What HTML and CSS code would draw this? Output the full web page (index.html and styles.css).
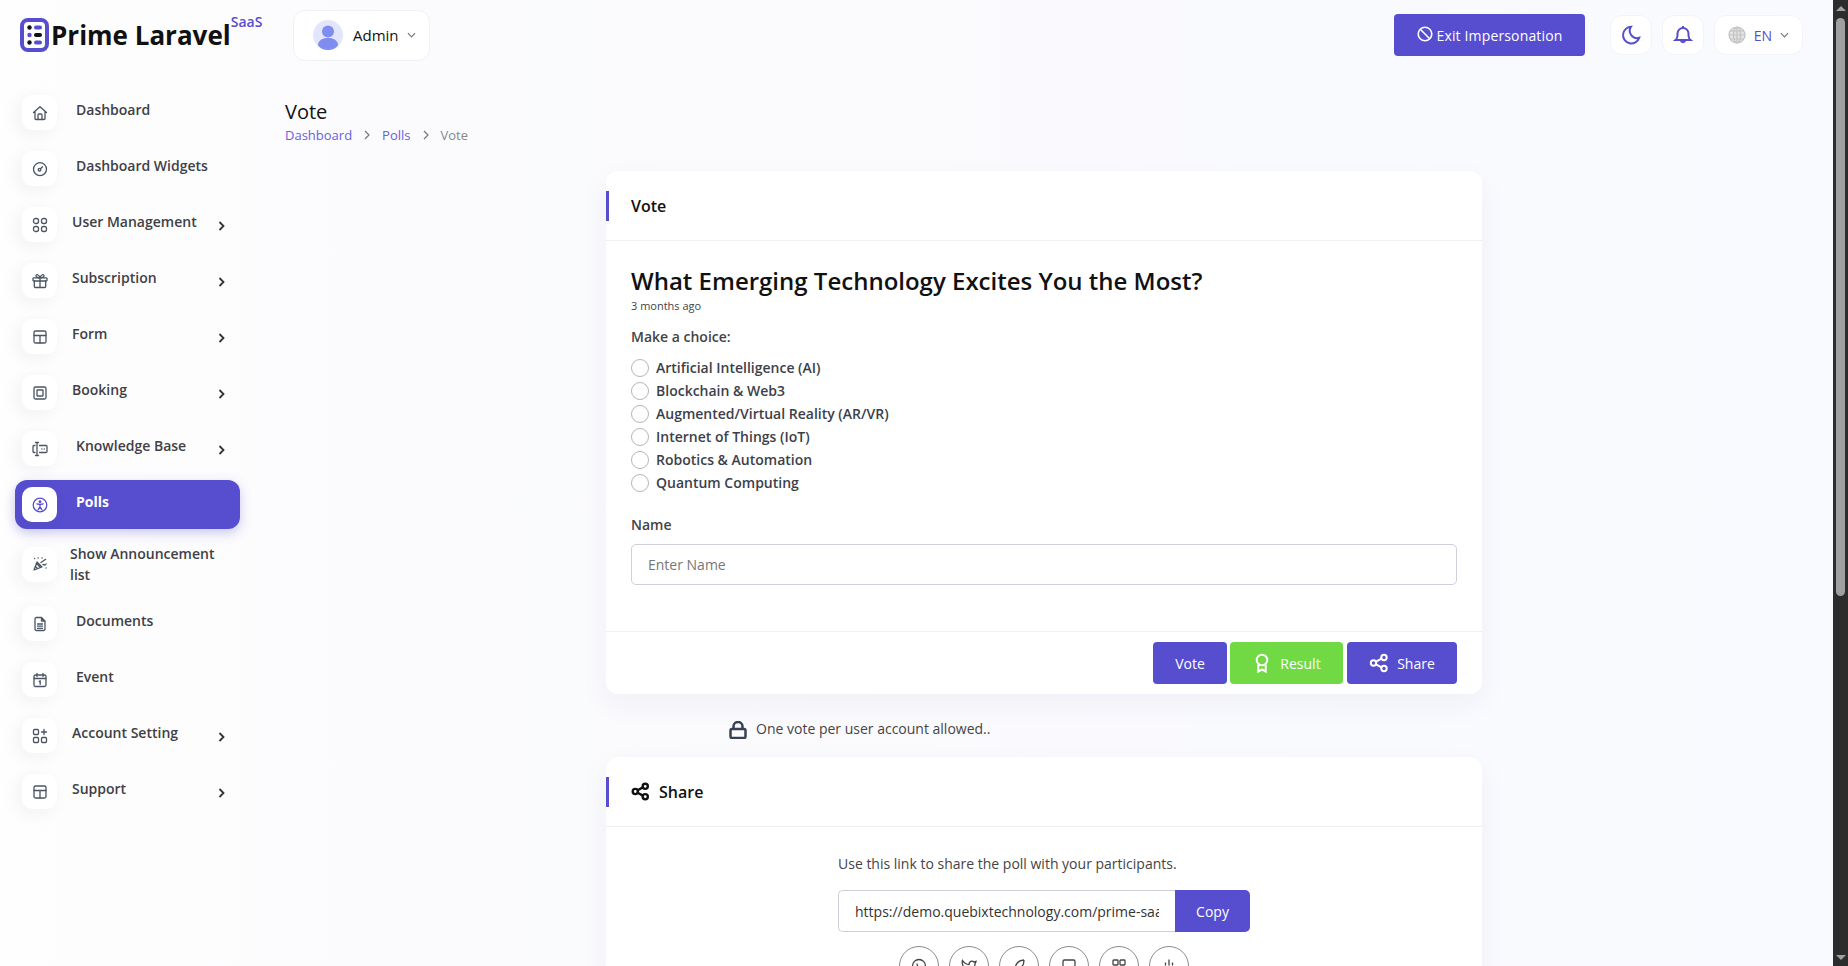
FILE: index.html
```html
<!DOCTYPE html>
<html lang="en">
<head>
  <meta charset="UTF-8">
  <title>Vote</title>
  <link rel="stylesheet" href="styles.css">
</head>
<body>

  <header class="topbar">
    <div class="brand">
      <svg class="brand-mark" viewBox="0 0 29 34">
        <rect x="2" y="2" width="25" height="30" rx="6" fill="#fff" stroke="#574ecf" stroke-width="4"/>
        <circle cx="9.500" cy="9.500" r="2.200" fill="#111"/><rect x="14" y="7.500" width="8" height="4" rx="2" fill="#574ecf"/>
        <circle cx="9.500" cy="17" r="2.200" fill="#574ecf"/><rect x="14" y="15" width="8" height="4" rx="2" fill="#111"/>
        <circle cx="9.500" cy="24.500" r="2.200" fill="#111"/><rect x="14" y="22.500" width="8" height="4" rx="2" fill="#574ecf"/>
      </svg>
      <span class="brand-name">Prime Laravel</span>
      <span class="brand-tag">SaaS</span>
    </div>

    <div class="user-box">
      <svg class="avatar" viewBox="0 0 30 30">
        <circle cx="15" cy="15" r="15" fill="#e3e6fb"/>
        <circle cx="15" cy="11.500" r="6" fill="#7f8cf0"/>
        <path d="M5 25.500c0-5 4-7.500 10-7.500s10 2.500 10 7.500c-2.500 3-6 4.500-10 4.500s-7.500-1.500-10-4.500z" fill="#7f8cf0"/>
      </svg>
      <span class="user-name">Admin</span>
      <svg class="caret" viewBox="0 0 10 6"><path d="M1 1l4 4 4-4"/></svg>
    </div>

    <div class="topbar-right">
      <button class="btn btn-exit">
        <svg class="icon-16" viewBox="0 0 16 16"><circle cx="8" cy="8" r="6.800"/><path d="M3.300 3.300l9.400 9.400"/></svg>
        Exit Impersonation
      </button>
      <div class="tool-box">
        <svg class="icon-20" viewBox="0 0 20 20"><path d="M10 1.800a8.300 8.300 0 1 0 8.200 11A7.300 7.300 0 0 1 10 1.800z"/></svg>
      </div>
      <div class="tool-box">
        <svg class="icon-20" viewBox="0 0 20 20"><path d="M2.500 15c1.200-1 2-2.200 2-4.500V8.500a5.500 5.500 0 0 1 11 0v2c0 2.300.8 3.500 2 4.500z"/><path d="M7.800 15.500a2.300 2.300 0 0 0 4.400 0M10 1v2"/></svg>
      </div>
      <div class="tool-box lang-box">
        <svg class="globe" viewBox="0 0 18 18"><circle cx="9" cy="9" r="8"/><ellipse cx="9" cy="9" rx="3.500" ry="8"/><path d="M1 9h16M2 5h14M2 13h14M9 1v16"/></svg>
        <span class="lang-name">EN</span>
        <svg class="caret" viewBox="0 0 10 6"><path d="M1 1l4 4 4-4"/></svg>
      </div>
    </div>
  </header>

  <div class="layout">
    <nav class="sidebar">
      <a class="nav-item">
        <span class="nav-icon"><svg viewBox="0 0 16 16"><path d="M1.500 7.500L8 1.800l6.500 5.700M3 6.500v7a1 1 0 0 0 1 1h8a1 1 0 0 0 1-1v-7M6 14.500V10a1 1 0 0 1 1-1h2a1 1 0 0 1 1 1v4.500"/></svg></span>
        <span class="nav-text">Dashboard</span>
      </a>
      <a class="nav-item">
        <span class="nav-icon"><svg viewBox="0 0 16 16"><circle cx="8" cy="8.200" r="6.500"/><circle cx="7.500" cy="8.700" r="1.300"/><path d="M8.500 7.700l2-2"/></svg></span>
        <span class="nav-text">Dashboard Widgets</span>
      </a>
      <a class="nav-item has-sub">
        <span class="nav-icon"><svg viewBox="0 0 16 16"><rect x="1.500" y="1.500" width="5" height="5" rx="2"/><rect x="9.500" y="1.500" width="5" height="5" rx="2"/><rect x="1.500" y="9.500" width="5" height="5" rx="2"/><rect x="9.500" y="9.500" width="5" height="5" rx="2"/></svg></span>
        <span class="nav-text">User Management</span>
        <svg class="nav-arrow" viewBox="0 0 7 10"><path d="M1.500 1l4 4-4 4"/></svg>
      </a>
      <a class="nav-item has-sub">
        <span class="nav-icon"><svg viewBox="0 0 16 16"><rect x="1" y="4.800" width="14" height="3.200" rx=".8"/><path d="M2.300 8v5.500a1 1 0 0 0 1 1h9.400a1 1 0 0 0 1-1V8M8 4.800v9.700M8 4.800C6 4.800 4 4.200 4 2.800c0-2 3-1.500 4 2 1-3.500 4-4 4-2 0 1.400-2 2-4 2z"/></svg></span>
        <span class="nav-text">Subscription</span>
        <svg class="nav-arrow" viewBox="0 0 7 10"><path d="M1.500 1l4 4-4 4"/></svg>
      </a>
      <a class="nav-item has-sub">
        <span class="nav-icon"><svg viewBox="0 0 16 16"><rect x="2" y="2" width="12" height="12" rx="1.500"/><path d="M2 6.500h12M8 6.500V14"/></svg></span>
        <span class="nav-text">Form</span>
        <svg class="nav-arrow" viewBox="0 0 7 10"><path d="M1.500 1l4 4-4 4"/></svg>
      </a>
      <a class="nav-item has-sub">
        <span class="nav-icon"><svg viewBox="0 0 16 16"><rect x="2" y="2" width="12" height="12" rx="1.500"/><rect x="5" y="5" width="6" height="6" rx=".5"/></svg></span>
        <span class="nav-text">Booking</span>
        <svg class="nav-arrow" viewBox="0 0 7 10"><path d="M1.500 1l4 4-4 4"/></svg>
      </a>
      <a class="nav-item has-sub nav-wide">
        <span class="nav-icon"><svg viewBox="0 0 16 16"><path d="M3.500 1.500h3M3.500 14.500h3M5 1.500v13M3 4.500H2a1 1 0 0 0-1 1v5a1 1 0 0 0 1 1h1M7.500 4.500H14a1 1 0 0 1 1 1v5a1 1 0 0 1-1 1H7.500M9.800 8h.1M12.200 8h.1"/></svg></span>
        <span class="nav-text">Knowledge Base</span>
        <svg class="nav-arrow" viewBox="0 0 7 10"><path d="M1.500 1l4 4-4 4"/></svg>
      </a>
      <a class="nav-item active">
        <span class="nav-icon"><svg viewBox="0 0 16 16"><circle cx="8" cy="8" r="6.800"/><circle cx="8" cy="4.800" r=".8"/><path d="M4.800 6.800L8 7.500l3.200-.7M8 7.500v2.500M8 10l-1.800 2.500M8 10l1.800 2.500"/></svg></span>
        <span class="nav-text">Polls</span>
      </a>
      <a class="nav-item nav-tall">
        <span class="nav-icon"><svg viewBox="0 0 16 16"><path d="M5 6L2 14l8-3zM3.500 10.500l2 2M4.800 7.800l3.400 3.400M2.500 2.500h.1M6 2h.1M10 2h.1M13.500 3.500h.1M9 6.500l3.500-2.500M14 8h.1M14 12h.1M11 8.500l2 .5"/></svg></span>
        <span class="nav-text">Show Announcement list</span>
      </a>
      <a class="nav-item">
        <span class="nav-icon"><svg viewBox="0 0 16 16"><path d="M9.500 1.500H4.300a1.300 1.300 0 0 0-1.300 1.300v10.400a1.300 1.300 0 0 0 1.300 1.300h7.400a1.300 1.300 0 0 0 1.300-1.300V5zM9.500 1.500V5H13M5.500 8h5M5.500 10.200h5M5.500 12.400h5"/></svg></span>
        <span class="nav-text">Documents</span>
      </a>
      <a class="nav-item">
        <span class="nav-icon"><svg viewBox="0 0 16 16"><rect x="2" y="3" width="12" height="11.500" rx="1.500"/><path d="M2 6.500h12M5 1.500V4.500M11 1.500V4.500M7.200 9.500l1-.7v3.500"/></svg></span>
        <span class="nav-text">Event</span>
      </a>
      <a class="nav-item has-sub">
        <span class="nav-icon"><svg viewBox="0 0 16 16"><rect x="1.500" y="1.500" width="5" height="5" rx="1"/><rect x="1.500" y="9.500" width="5" height="5" rx="1"/><rect x="9.500" y="9.500" width="5" height="5" rx="1"/><path d="M12 1.500v5M9.500 4h5"/></svg></span>
        <span class="nav-text">Account Setting</span>
        <svg class="nav-arrow" viewBox="0 0 7 10"><path d="M1.500 1l4 4-4 4"/></svg>
      </a>
      <a class="nav-item has-sub">
        <span class="nav-icon"><svg viewBox="0 0 16 16"><rect x="2" y="2" width="12" height="12" rx="1.500"/><path d="M2 6.500h12M8 6.500V14"/></svg></span>
        <span class="nav-text">Support</span>
        <svg class="nav-arrow" viewBox="0 0 7 10"><path d="M1.500 1l4 4-4 4"/></svg>
      </a>
    </nav>

    <main class="content">
      <div class="page-head">
        <h1 class="page-title">Vote</h1>
        <ol class="crumbs">
          <li><a>Dashboard</a></li>
          <li class="crumb-sep"><svg viewBox="0 0 6 10"><path d="M1 1l4 4-4 4"/></svg></li>
          <li><a>Polls</a></li>
          <li class="crumb-sep"><svg viewBox="0 0 6 10"><path d="M1 1l4 4-4 4"/></svg></li>
          <li class="crumb-now">Vote</li>
        </ol>
      </div>

      <div class="column">
        <section class="card">
          <div class="card-head">Vote</div>
          <div class="card-body">
            <h2 class="poll-title">What Emerging Technology Excites You the Most?</h2>
            <p class="poll-age">3 months ago</p>
            <p class="poll-prompt">Make a choice:</p>
            <div class="choices">
              <label class="choice"><input type="radio" name="poll"> Artificial Intelligence (AI)</label>
              <label class="choice"><input type="radio" name="poll"> Blockchain &amp; Web3</label>
              <label class="choice"><input type="radio" name="poll"> Augmented/Virtual Reality (AR/VR)</label>
              <label class="choice"><input type="radio" name="poll"> Internet of Things (IoT)</label>
              <label class="choice"><input type="radio" name="poll"> Robotics &amp; Automation</label>
              <label class="choice"><input type="radio" name="poll"> Quantum Computing</label>
            </div>
            <label class="field-label" for="voterName">Name</label>
            <input class="field" id="voterName" type="text" placeholder="Enter Name">
          </div>
          <div class="card-foot">
            <button class="btn btn-vote">Vote</button>
            <button class="btn btn-result">
              <svg class="icon-20" viewBox="0 0 20 20"><circle cx="10" cy="7" r="5.300"/><path d="M6.300 11.500V18.500l3.700-2 3.700 2v-7"/></svg>
              Result
            </button>
            <button class="btn btn-share">
              <svg class="icon-20" viewBox="0 0 20 20"><circle cx="4.500" cy="10" r="2.700"/><circle cx="15" cy="4.500" r="2.700"/><circle cx="15" cy="15.500" r="2.700"/><path d="M7 8.700l5.500-3M7 11.300l5.500 3"/></svg>
              Share
            </button>
          </div>
        </section>

        <p class="vote-note">
          <svg viewBox="0 0 18 18"><rect x="1.500" y="8" width="15" height="9" rx="1.500"/><path d="M4.500 8V5.500a4.500 4.500 0 0 1 9 0V8"/></svg>
          One vote per user account allowed..
        </p>

        <section class="card share-card">
          <div class="card-head">
            <svg viewBox="0 0 20 20"><circle cx="4.500" cy="10" r="2.700"/><circle cx="15" cy="4.500" r="2.700"/><circle cx="15" cy="15.500" r="2.700"/><path d="M7 8.700l5.500-3M7 11.300l5.500 3"/></svg>
            Share
          </div>
          <div class="share-body">
            <p class="share-text">Use this link to share the poll with your participants.</p>
            <div class="copy-row">
              <input class="copy-input" type="text" value="https://demo.quebixtechnology.com/prime-saas/polls/vote/1" readonly>
              <button class="btn btn-copy">Copy</button>
            </div>
            <div class="socials">
              <a class="social"><svg viewBox="0 0 16 16"><circle cx="8" cy="8" r="6.500"/><path d="M6 5.500c0 2.500 2 4.500 4.500 4.500"/></svg></a>
              <a class="social"><svg viewBox="0 0 16 16"><path d="M1.500 2.500c2 3 4 4 6.500 4 0-3 3-4.500 5-2.500l2-.5-1 2.500c0 5-3 8-7.500 8-2 0-3.500-.5-5-1.500 2 0 3-.5 4-1.500-3-1-5-5-4-8.500z"/></svg></a>
              <a class="social"><svg viewBox="0 0 16 16"><path d="M13 2C7 2.500 4.500 6 4 11l-1 3.500M13 2c0 6-3 9-8 9"/></svg></a>
              <a class="social"><svg viewBox="0 0 16 16"><rect x="2" y="2" width="12" height="12" rx="1.500"/><path d="M5 5h.1"/></svg></a>
              <a class="social"><svg viewBox="0 0 16 16"><rect x="2" y="2" width="5" height="5" rx=".8"/><rect x="9" y="2" width="5" height="5" rx=".8"/><rect x="2" y="9" width="5" height="5" rx=".8"/><rect x="9" y="9" width="5" height="5" rx=".8"/></svg></a>
              <a class="social"><svg viewBox="0 0 16 16"><path d="M8 1.500v6M4.500 4.500v3M11.500 4.500v3M2 9h12v5H2z"/></svg></a>
            </div>
          </div>
        </section>
      </div>
    </main>
  </div>

  <div class="scrollbar">
    <span class="scroll-up"></span>
    <span class="scroll-thumb"></span>
    <span class="scroll-down"></span>
  </div>

</body>
</html>
```

FILE: styles.css
```css
body {
  margin: 0;
  padding-right: 15px;
  font-family: "Open Sans", "Liberation Sans", sans-serif;
  font-size: 14px;
  color: #333;
  background: linear-gradient(90deg, #fefefe 0, #fbfbfd 20%, #f9faff 100%);
}

p, h1, h2, ol {
  margin: 0;
  padding: 0;
}

/* window scrollbar, part of the picture */
.scrollbar {
  position: fixed;
  top: 0;
  right: 0;
  bottom: 0;
  display: flex;
  flex-direction: column;
  align-items: center;
  width: 15px;
  background: #2c2c2c;
}

.scroll-up, .scroll-down {
  width: 0;
  height: 0;
  border-left: 5px solid transparent;
  border-right: 5px solid transparent;
}

.scroll-up {
  margin-top: 6px;
  border-bottom: 5px solid #a0a0a0;
}

.scroll-thumb {
  width: 9px;
  height: 578px;
  margin-top: 7px;
  border-radius: 5px;
  background: #a0a0a0;
}

.scroll-down {
  margin-top: auto;
  margin-bottom: 6px;
  border-top: 5px solid #a0a0a0;
}

/* top bar */
.topbar {
  display: flex;
  align-items: center;
  height: 70px;
  padding: 0 30px 0 20px;
}

.brand {
  display: flex;
  align-items: center;
  gap: 2px;
  width: 241px;
  margin-right: 32px;
}

.brand-mark {
  width: 29px;
  height: 34px;
  flex: none;
}

.brand-name {
  font-size: 26px;
  font-weight: 700;
  color: #111;
  line-height: 38px;
  white-space: nowrap;
}

.brand-tag {
  align-self: flex-start;
  margin: -4px 0 0 -2px;
  font-size: 14px;
  font-weight: 600;
  color: #574ecf;
}

.user-box {
  display: flex;
  align-items: center;
  width: 137px;
  height: 51px;
  box-sizing: border-box;
  padding-left: 19px;
  border: 1px solid #f1f1f5;
  border-radius: 12px;
  background: #fff;
}

.avatar {
  width: 30px;
  height: 30px;
}

.user-name {
  margin: 0 8px 0 10px;
  font-size: 15px;
  font-weight: 500;
  color: #111;
}

.caret {
  width: 9px;
  height: 6px;
  fill: none;
  stroke: #777;
  stroke-width: 1.300;
}

.topbar-right {
  display: flex;
  align-items: center;
  margin-left: auto;
}

.tool-box {
  display: flex;
  align-items: center;
  justify-content: center;
  width: 42px;
  height: 40px;
  margin-left: 10px;
  border: 1px solid #f4f4f8;
  box-sizing: border-box;
  border-radius: 12px;
  background: #fff;
  color: #574ecf;
}

.tool-box .icon-20 {
  stroke-width: 2;
}

.lang-box {
  width: 89px;
  gap: 8px;
}

.globe {
  width: 18px;
  height: 18px;
  fill: #e4e4e4;
  stroke: #c2c2c2;
  stroke-width: 1.200;
}

.lang-name {
  font-weight: 500;
  color: #574ecf;
}

.icon-16, .icon-20 {
  fill: none;
  stroke: currentColor;
  stroke-width: 1.600;
  flex: none;
}

.icon-16 {
  width: 16px;
  height: 16px;
}

.icon-20 {
  width: 20px;
  height: 20px;
}

/* buttons */
.btn {
  display: inline-flex;
  align-items: center;
  justify-content: center;
  height: 42px;
  border: none;
  border-radius: 4px;
  font-family: inherit;
  font-size: 14px;
  font-weight: 500;
  color: #fff;
  background: #574ecf;
}

.btn-exit {
  width: 191px;
  margin-right: 15px;
  gap: 4px;
  letter-spacing: 0.15px;
}

.btn-exit .icon-16 {
  margin-bottom: 3px;
}

.btn-vote {
  width: 74px;
}

.btn-result {
  width: 113px;
  gap: 8px;
  background: #70d944;
}

.btn-result .icon-20, .btn-share .icon-20 {
  stroke-width: 2;
}

.btn-share {
  width: 110px;
  margin-left: 1px;
  gap: 8px;
}

/* sidebar */
.layout {
  display: flex;
}

.sidebar {
  display: flex;
  flex-direction: column;
  gap: 7px;
  flex: none;
  box-sizing: border-box;
  width: 255px;
  padding: 18px 0 0 15px;
}

.nav-item {
  display: flex;
  align-items: center;
  box-sizing: border-box;
  width: 225px;
  min-height: 49px;
  padding: 0 15px 0 7px;
  border-radius: 12px;
  color: #3f3f46;
  font-weight: 600;
  font-size: 14px;
}

.nav-icon {
  display: flex;
  align-items: center;
  justify-content: center;
  flex: none;
  width: 35px;
  height: 35px;
  border-radius: 10px;
  background: #fff;
  box-shadow: -4px 4px 18px rgba(30, 30, 60, 0.06);
}

.nav-icon svg {
  width: 16px;
  height: 16px;
  fill: none;
  stroke: #4b5563;
  stroke-width: 1.300;
  stroke-linecap: round;
  stroke-linejoin: round;
}

.nav-text {
  margin-left: 19px;
  padding-bottom: 6px;
  line-height: 21px;
}

.has-sub .nav-text {
  margin-left: 15px;
}

.nav-wide .nav-text {
  margin-left: 19px;
}

.nav-tall {
  min-height: 56px;
}

.nav-tall .nav-text {
  margin-left: 13px;
  padding-bottom: 0;
}

.nav-arrow {
  width: 7px;
  height: 10px;
  margin-left: auto;
  margin-top: 2px;
  fill: none;
  stroke: #333;
  stroke-width: 1.800;
}

.nav-item.active {
  color: #fff;
  font-weight: 700;
  background: #574ecf;
  box-shadow: 0 4px 12px rgba(87, 78, 207, 0.3);
}

.active .nav-icon svg {
  stroke: #574ecf;
}

/* page */
.content {
  flex: 1;
  min-width: 0;
}

.page-head {
  padding: 28px 0 0 30px;
}

.page-title {
  font-size: 20px;
  font-weight: 500;
  line-height: 27px;
  color: #111;
}

.crumbs {
  display: flex;
  align-items: center;
  list-style: none;
  font-size: 13px;
  line-height: 20px;
  color: #6a5fe0;
}

.crumb-sep {
  display: flex;
  margin: 0 12px;
}

.crumb-sep svg {
  width: 6px;
  height: 10px;
  fill: none;
  stroke: #777;
  stroke-width: 1.200;
}

.crumb-now {
  color: #888;
}

.column {
  width: 876px;
  margin: 26px auto 0;
}

.card {
  border-radius: 12px;
  background: #fff;
  box-shadow: 0 10px 30px rgba(40, 40, 90, 0.05);
}

.card-head {
  position: relative;
  display: flex;
  align-items: center;
  gap: 9px;
  height: 69px;
  padding-left: 25px;
  border-bottom: 1px solid #f0f0f3;
  font-size: 16px;
  font-weight: 600;
  color: #111;
}

.card-head::before {
  content: "";
  position: absolute;
  left: 0;
  top: 20px;
  width: 3px;
  height: 30px;
  background: #574ecf;
}

.card-head svg {
  width: 19px;
  height: 19px;
  fill: none;
  stroke: #111;
  stroke-width: 2.500;
}

.card-body {
  padding: 23px 25px 46px;
}

.poll-title {
  font-size: 24px;
  font-weight: 600;
  line-height: 34px;
  color: #111;
}

.poll-age {
  font-size: 11px;
  line-height: 15px;
  color: #444;
}

.poll-prompt {
  margin-top: 14px;
  font-weight: 600;
  line-height: 19px;
  color: #444;
}

.choices {
  margin-top: 10px;
}

.choice {
  display: flex;
  align-items: center;
  gap: 7px;
  height: 23px;
  font-weight: 600;
  color: #3c3f4a;
}

.choice input {
  appearance: none;
  width: 18px;
  height: 18px;
  margin: 0;
  border: 1px solid #b5b5b5;
  border-radius: 50%;
  background: #fff;
}

.field-label {
  display: block;
  margin-top: 21px;
  margin-bottom: 10px;
  font-weight: 600;
  line-height: 19px;
  color: #444;
}

.field {
  display: block;
  box-sizing: border-box;
  width: 100%;
  height: 41px;
  padding: 0 16px;
  border: 1px solid #cdd0d8;
  border-radius: 5px;
  font-family: inherit;
  font-size: 14px;
  color: #333;
}

.field::placeholder {
  color: #777;
}

.card-foot {
  display: flex;
  justify-content: flex-end;
  gap: 3px;
  padding: 10px 25px 10px 0;
  border-top: 1px solid #f0f0f3;
}

.vote-note {
  display: flex;
  align-items: center;
  gap: 9px;
  height: 18px;
  margin: 25px 0 20px;
  padding-left: 123px;
  color: #444;
}

.vote-note svg {
  width: 18px;
  height: 18px;
  margin-top: 3px;
  fill: none;
  stroke: #374151;
  stroke-width: 2.500;
}

.share-card {
  min-height: 760px;
}

.share-body {
  width: 412px;
  margin: 0 auto;
  padding-top: 27px;
}

.share-text {
  line-height: 19px;
  color: #444;
}

.copy-row {
  display: flex;
  margin-top: 17px;
}

.copy-input {
  flex: 1;
  min-width: 0;
  box-sizing: border-box;
  height: 42px;
  padding: 0 16px;
  border: 1px solid #cdd0d8;
  border-right: none;
  border-radius: 5px 0 0 5px;
  font-family: inherit;
  font-size: 14px;
  color: #333;
}

.btn-copy {
  width: 75px;
  border-radius: 0 5px 5px 0;
}

.socials {
  display: flex;
  justify-content: center;
  gap: 10px;
  margin-top: 14px;
}

.social {
  display: flex;
  align-items: center;
  justify-content: center;
  width: 40px;
  height: 40px;
  box-sizing: border-box;
  border: 1px solid #8a8a8a;
  border-radius: 50%;
}

.social svg {
  width: 16px;
  height: 16px;
  fill: none;
  stroke: #444;
  stroke-width: 1.300;
}
```
